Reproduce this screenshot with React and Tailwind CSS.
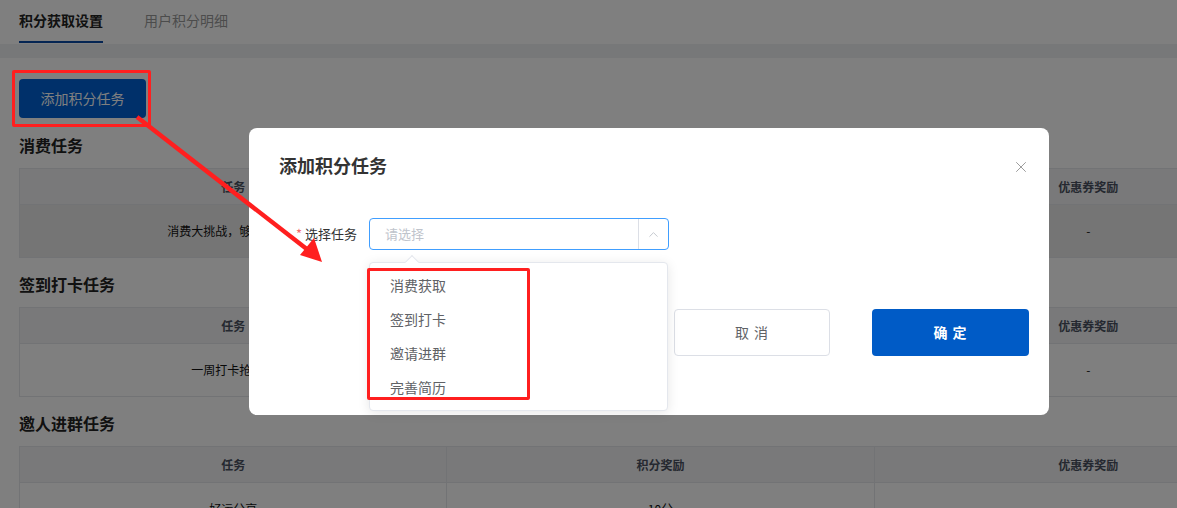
import { X, ChevronUp } from 'lucide-react'

const sections = [
  { title: '消费任务', task: '消费大挑战，够劲够省钱', points: '', coupon: '-', hover: true },
  { title: '签到打卡任务', task: '一周打卡抢好礼', points: '', coupon: '-' },
  { title: '邀人进群任务', task: '好运分享', points: '10分', coupon: '' },
]

const options = ['消费获取', '签到打卡', '邀请进群', '完善简历']

function TaskTable({ row }) {
  return (
    <div className="w-[1284px] border border-[#e4e6eb] text-[12px]">
      <div className="grid grid-cols-3 h-[36px] bg-[#f2f3f5] text-[#4a5160] font-bold border-b border-[#e4e6eb]">
        <div className="flex items-center justify-center border-r border-[#e4e6eb]">任务</div>
        <div className="flex items-center justify-center border-r border-[#e4e6eb]">积分奖励</div>
        <div className="flex items-center justify-center">优惠券奖励</div>
      </div>
      <div className={`grid grid-cols-3 h-[52px] text-[#111] ${row.hover ? 'bg-[#ebebeb]' : 'bg-white'}`}>
        <div className="flex items-center justify-center border-r border-[#e4e6eb]">{row.task}</div>
        <div className="flex items-center justify-center border-r border-[#e4e6eb]">{row.points}</div>
        <div className="flex items-center justify-center">{row.coupon}</div>
      </div>
    </div>
  )
}

export default function App() {
  return (
    <div
      className="relative w-[1177px] h-[508px] overflow-hidden bg-white"
      style={{ fontFamily: '"Noto Sans CJK SC", "Noto Sans", sans-serif' }}
    >
      {/* page */}
      <div className="flex h-[44px] px-[19px] gap-[41px] text-[14px]">
        <div className="relative flex items-center pb-[4px] font-bold text-[#222]">
          积分获取设置
          <div className="absolute left-0 right-0 bottom-[1px] h-[2px] bg-[#0a4aa6]" />
        </div>
        <div className="flex items-center pb-[4px] text-[#999]">用户积分明细</div>
      </div>
      <div className="h-[14px] bg-[#eef0f3]" />
      <div className="px-[19px] pt-[21px]">
        <button className="h-[39px] w-[127px] rounded-[4px] bg-[#0060d4] text-white text-[14px]">
          添加积分任务
        </button>
        {sections.map((s, i) => (
          <div key={s.title} className={i === 0 ? 'mt-[16px]' : 'mt-[15px]'}>
            <div className="h-[24px] leading-[22px] text-[16px] font-bold text-[#222] mb-[10px]">{s.title}</div>
            <TaskTable row={s} />
          </div>
        ))}
      </div>

      {/* mask */}
      <div className="absolute inset-0 bg-black/50" />

      {/* dialog */}
      <div className="absolute left-[249px] top-[128px] w-[800px] h-[287px] rounded-[8px] bg-white flex flex-col">
        <div className="relative pt-[25px] px-[30px]">
          <div className="text-[18px] leading-[24px] font-bold text-[#333]">添加积分任务</div>
          <X className="absolute left-[763px] top-[30px] w-[18px] h-[18px] text-[#999]" strokeWidth={1.3} />
        </div>
        <div className="flex items-center mt-[41px] h-[32px]">
          <div className="w-[108px] text-right text-[13px] text-[#333]">
            <span className="text-[#f56c6c] mr-[3px]">*</span>选择任务
          </div>
          <div className="ml-[12px] w-[300px] h-[32px] rounded-[4px] border border-[#409eff] flex items-center">
            <div className="flex-1 pl-[15px] text-[13px] text-[#c0c4cc]">请选择</div>
            <div className="w-[1px] h-[30px] bg-[#dcdfe6]" />
            <div className="w-[29px] flex items-center justify-center">
              <ChevronUp className="w-[15px] h-[15px] text-[#c0c4cc]" strokeWidth={1.5} />
            </div>
          </div>
        </div>
        <div className="flex justify-end gap-[42px] pr-[20px] mt-[59px]">
          <button className="w-[156px] h-[47px] rounded-[4px] border border-[#dcdfe6] bg-white text-[14px] text-[#606266] tracking-[1px]">
            取 消
          </button>
          <button className="w-[157px] h-[47px] rounded-[4px] bg-[#005bc6] text-[14px] text-white font-bold tracking-[1px]">
            确 定
          </button>
        </div>
      </div>

      {/* dropdown */}
      <div className="absolute left-[369px] top-[262px] w-[299px] h-[149px] rounded-[4px] border border-[#e4e7ed] bg-white shadow-[0_2px_12px_rgba(0,0,0,0.1)] pt-[5px]">
        <div className="absolute left-[37px] -top-[6px] w-[10px] h-[10px] rotate-45 bg-white border-l border-t border-[#e4e7ed]" />
        {options.map(o => (
          <div key={o} className="h-[34px] flex items-center pl-[20px] text-[14px] text-[#606266]">{o}</div>
        ))}
      </div>

      {/* annotations */}
      <div className="absolute left-[12px] top-[70px] w-[139px] h-[57px] border-[3px] border-[#ff1f1f] rounded-[2px]" />
      <div className="absolute left-[367px] top-[268px] w-[163px] h-[132px] border-[3px] border-[#ff1f1f] rounded-[2px]" />
      <svg className="absolute left-0 top-0" width="1177" height="508" viewBox="0 0 1177 508">
        <line x1="137" y1="117" x2="308" y2="250" stroke="#ff1f1f" strokeWidth="4.5" />
        <polygon points="322,262 300,255 314,238" fill="#ff1f1f" />
      </svg>
    </div>
  )
}
